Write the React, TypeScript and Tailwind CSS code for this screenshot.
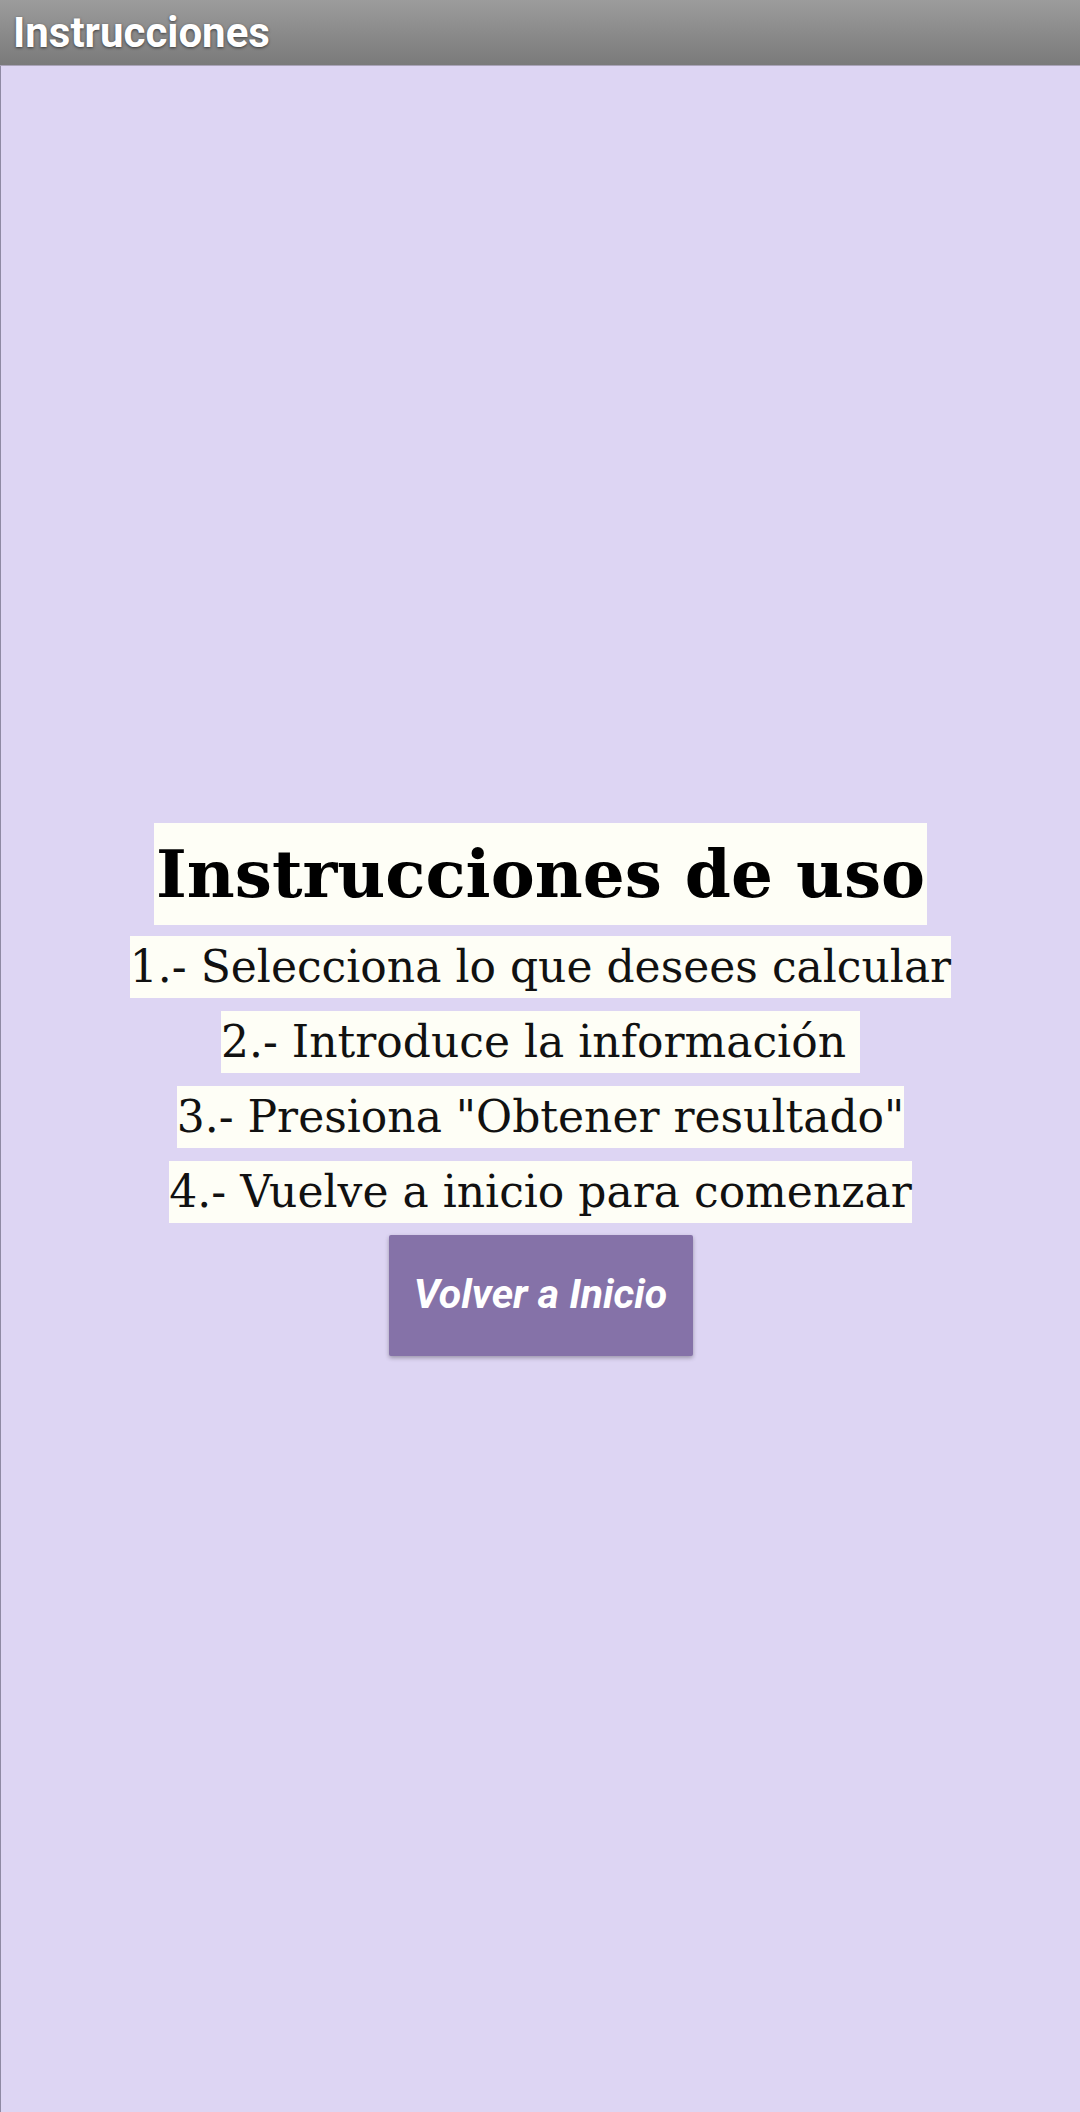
import React from 'react';

const steps = [
  '1.- Selecciona lo que desees calcular',
  '2.- Introduce la información ',
  '3.- Presiona "Obtener resultado"',
  '4.- Vuelve a inicio para comenzar',
];

export default function App() {
  return (
    <div className="w-[1080px] h-[2112px] flex flex-col bg-[#ddd5f3]">
      <div
        className="h-[66px] flex items-center px-[13px] bg-gradient-to-b from-[#9c9c9c] to-[#7a7a7a] border-b border-[#a9a3b8]"
        style={{ fontFamily: 'Roboto, sans-serif' }}
      >
        <span className="text-white font-bold text-[42px] leading-none [text-shadow:0_1px_3px_rgba(0,0,0,0.6)]">
          Instrucciones
        </span>
      </div>

      <div className="flex-1 flex flex-col items-center justify-center border-l border-[#8f8aa3]">
        <div className="flex flex-col items-center" style={{ fontFamily: '"DejaVu Serif", serif' }}>
          <div className="bg-[#fefef6] text-black font-bold text-[66px] leading-[102px] px-[2px]">
            Instrucciones de uso
          </div>
          <div className="flex flex-col items-center gap-[13px] mt-[11px]">
            {steps.map((s) => (
              <div key={s} className="bg-[#fefef6] text-[#111] text-[44px] leading-[62px] whitespace-pre">
                {s}
              </div>
            ))}
          </div>
          <button
            className="mt-[12px] w-[304px] h-[121px] bg-[#8572a8] text-white font-bold italic text-[41px] shadow-[0_2px_4px_rgba(0,0,0,0.3)] rounded-[2px]"
            style={{ fontFamily: 'Roboto, sans-serif' }}
          >
            Volver a Inicio
          </button>
        </div>
      </div>
    </div>
  );
}
